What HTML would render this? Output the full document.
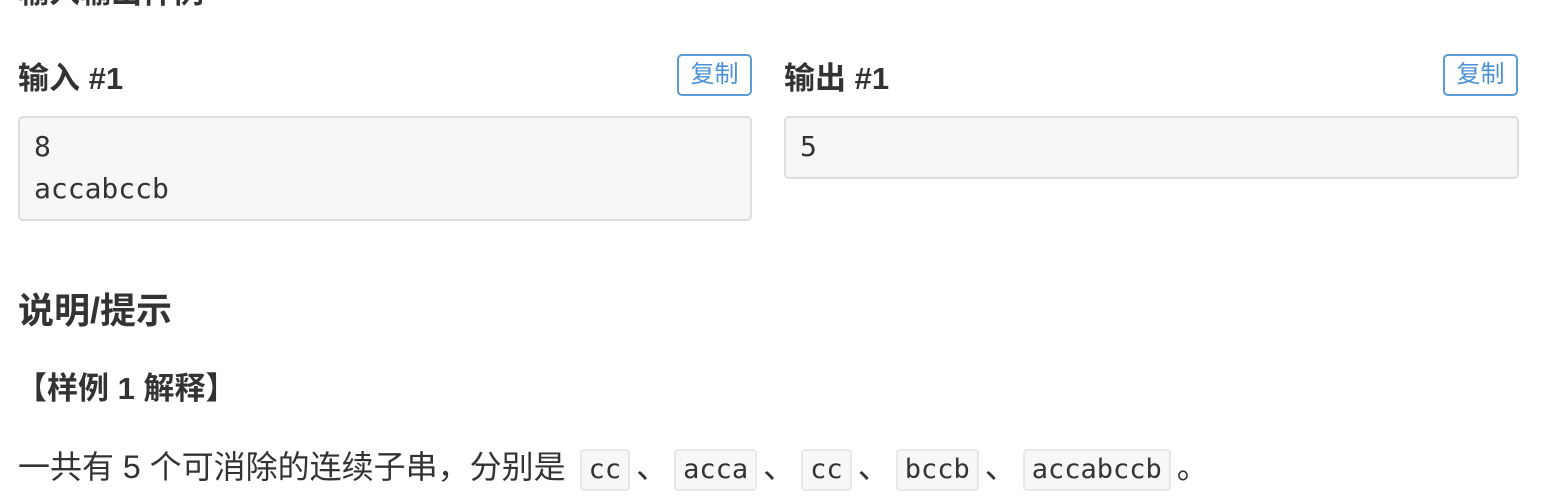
<!DOCTYPE html>
<html><head><meta charset="utf-8"><style>
body{margin:0;width:1550px;height:500px;overflow:hidden;background:#fff;color:#333;font-family:"Liberation Sans","Noto Sans CJK SC",sans-serif;position:relative}
.a{position:absolute;white-space:nowrap}
.btn{position:absolute;border:2px solid #5a9bd8;color:#4a90d6;border-radius:5px;font-size:24px;line-height:38px;text-align:center;width:75px;height:42px;box-sizing:border-box}
.pre{position:absolute;background:#f7f7f7;border:2px solid #ddd;border-radius:5px;box-sizing:border-box;font-family:"DejaVu Sans Mono","Liberation Mono",monospace;font-size:28px;line-height:42px;padding:8px 14px;color:#333}
code{font-family:"DejaVu Sans Mono","Liberation Mono",monospace;font-size:27px;background:#f7f7f7;border:2px solid #e8e8e8;border-radius:4px;padding:2px 7px;display:inline-block;line-height:34px;vertical-align:middle;margin:0 6px}
</style></head><body>
<div class="a" style="left:18px;top:-33px;font-size:31px;font-weight:bold">输入输出样例</div>
<div class="a" style="left:18px;top:59px;font-size:31px;font-weight:bold;line-height:40px">输入 #1</div>
<div class="btn" style="left:677px;top:54px">复制</div>
<div class="pre" style="left:18px;top:116px;width:734px;height:105px">8<br>accabccb</div>
<div class="a" style="left:784px;top:59px;font-size:31px;font-weight:bold;line-height:40px">输出 #1</div>
<div class="btn" style="left:1443px;top:54px">复制</div>
<div class="pre" style="left:784px;top:116px;width:735px;height:63px">5</div>
<div class="a" style="left:18px;top:289px;font-size:36px;font-weight:bold;line-height:44px">说明/提示</div>
<div class="a" style="left:16px;top:369px;font-size:31px;font-weight:bold;line-height:40px">【样例 1 解释】</div>
<div class="a" style="left:18px;top:445px;font-size:32px;line-height:44px">一共有 5 个可消除的连续子串，分别是<code style="margin-left:14px">cc</code>、<code>acca</code>、<code>cc</code>、<code>bccb</code>、<code>accabccb</code>。</div>
</body></html>
